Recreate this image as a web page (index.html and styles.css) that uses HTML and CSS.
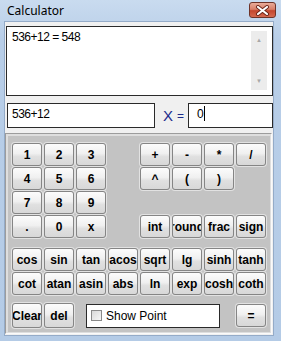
FILE: index.html
```html
<!DOCTYPE html>
<html lang="en">
<head>
    <meta charset="UTF-8">
    <title>Calculator</title>
    <link rel="stylesheet" href="styles.css">
</head>
<body>
    <div class="window">
        <!-- title bar -->
        <div class="titlebar">
            <span class="title">Calculator</span>
            <div class="close-btn">
                <svg width="15" height="11" viewBox="0 0 15 11">
                    <path d="M3 2 L12 9 M12 2 L3 9" stroke="#6a2418" stroke-width="4" stroke-linecap="round"/>
                    <path d="M3 2 L12 9 M12 2 L3 9" stroke="#fff" stroke-width="2.2" stroke-linecap="round"/>
                </svg>
            </div>
        </div>

        <div class="client">
            <!-- history -->
            <div class="history">
                <div class="history-text">536+12 = 548</div>
                <div class="scrollbar">
                    <span class="arrow">&#9650;</span>
                    <span class="arrow">&#9660;</span>
                </div>
            </div>

            <!-- expression + x value -->
            <div class="input-row">
                <div class="field expr">536+12</div>
                <span class="xlabel">X</span>
                <span class="eq">=</span>
                <div class="field xval">0<span class="caret"></span></div>
            </div>

            <!-- keypad -->
            <div class="pad">
                <div class="top">
                    <div class="digits">
                        <div class="key">1</div>
                        <div class="key">2</div>
                        <div class="key">3</div>
                        <div class="key">4</div>
                        <div class="key">5</div>
                        <div class="key">6</div>
                        <div class="key">7</div>
                        <div class="key">8</div>
                        <div class="key">9</div>
                        <div class="key">.</div>
                        <div class="key">0</div>
                        <div class="key">x</div>
                    </div>
                    <div class="ops-block">
                        <div class="ops">
                            <div class="key">+</div>
                            <div class="key">-</div>
                            <div class="key">*</div>
                            <div class="key">/</div>
                            <div class="key">^</div>
                            <div class="key">(</div>
                            <div class="key">)</div>
                        </div>
                        <div class="ops">
                            <div class="key">int</div>
                            <div class="key">round</div>
                            <div class="key">frac</div>
                            <div class="key">sign</div>
                        </div>
                    </div>
                </div>

                <div class="fns">
                    <div class="key">cos</div>
                    <div class="key">sin</div>
                    <div class="key">tan</div>
                    <div class="key">acos</div>
                    <div class="key">sqrt</div>
                    <div class="key">lg</div>
                    <div class="key">sinh</div>
                    <div class="key">tanh</div>
                    <div class="key">cot</div>
                    <div class="key">atan</div>
                    <div class="key">asin</div>
                    <div class="key">abs</div>
                    <div class="key">ln</div>
                    <div class="key">exp</div>
                    <div class="key">cosh</div>
                    <div class="key">coth</div>
                </div>

                <div class="bottom">
                    <div class="key tall">Clear</div>
                    <div class="key tall">del</div>
                    <div class="check-box">
                        <span class="check"></span>
                        <span>Show Point</span>
                    </div>
                    <div class="key equals">=</div>
                </div>
            </div>
        </div>
    </div>
</body>
</html>
```

FILE: styles.css
```css
body {
    margin: 0;
    font-family: "Liberation Sans", Arial, sans-serif;
    background: #b9cfe9;
}
.window {
    width: 281px;
    height: 341px;
    display: flex;
    flex-direction: column;
    background: linear-gradient(#c9dbef, #b8cee8 40px, #b4cbe6);
    box-sizing: border-box;
}
.titlebar {
    height: 21px;
    display: flex;
    align-items: center;
    padding: 0 5px 0 7px;
    flex-shrink: 0;
}
.title {
    font-family: "Noto Sans", "Liberation Sans", sans-serif;
    font-size: 12px;
    color: #000;
    margin-top: -1px;
}
.close-btn {
    margin-left: auto;
    width: 27px;
    height: 16px;
    box-sizing: border-box;
    border: 1px solid #6e3328;
    border-radius: 3px;
    background: linear-gradient(#e9ab98, #d8806a 45%, #c4462e 55%, #d56a50);
    display: flex;
    align-items: center;
    justify-content: center;
    margin-top: -1px;
}
.client {
    flex: 1;
    margin: 0 7px 5px 4px;
    border: 1px solid #94abc8;
    background: #f0f0f0;
    padding: 4px 0 1px 1px;
    display: flex;
    flex-direction: column;
}
.history {
    height: 70px;
    box-sizing: border-box;
    border: 1px solid #2a2a2a;
    background: #fff;
    display: flex;
}
.history-text {
    flex: 1;
    font-size: 12px;
    letter-spacing: -0.5px;
    line-height: 14px;
    padding: 3px 0 0 5px;
}
.scrollbar {
    width: 16px;
    margin: 4px 5px 5px 0;
    background: #ececec;
    display: flex;
    flex-direction: column;
    justify-content: space-between;
    align-items: center;
    padding: 5px 0;
    box-sizing: border-box;
}
.arrow {
    font-size: 6px;
    color: #a8a8a8;
    line-height: 8px;
}
.input-row {
    display: flex;
    align-items: center;
    margin-top: 7px;
    height: 25px;
}
.field {
    height: 25px;
    box-sizing: border-box;
    border: 1px solid #2a2a2a;
    background: #fff;
    font-size: 12px;
    letter-spacing: -0.5px;
    line-height: 14px;
    padding-top: 3px;
}
.expr {
    width: 148px;
    margin-left: 1px;
    padding-left: 4px;
}
.xval {
    flex: 1;
    padding-left: 8px;
    display: flex;
    align-items: flex-start;
}
.caret {
    width: 1px;
    height: 15px;
    background: #000;
    margin-left: 1px;
    margin-top: -1px;
}
.xlabel {
    color: #1b2b8c;
    font-size: 15px;
    margin-left: 8px;
    width: 10px;
}
.eq {
    color: #1b2b8c;
    font-size: 12px;
    margin: 0 4px;
}
.pad {
    flex: 1;
    margin: 5px 1px 0 -1px;
    border: 1px solid;
    border-color: #9c9c9c #fafafa #fafafa #9c9c9c;
    box-shadow: inset 2px 2px 0 #dedede, inset -1px -1px 0 #dedede;
    background: #c3c3c3;
    padding: 9px 0 0 6px;
}
.top {
    display: flex;
    gap: 34px;
}
.digits {
    display: grid;
    grid-template-columns: repeat(3, 30px);
    grid-auto-rows: 23px;
    gap: 1px 2px;
}
.ops-block {
    display: flex;
    flex-direction: column;
    justify-content: space-between;
}
.ops {
    display: grid;
    grid-template-columns: repeat(4, 30px);
    grid-auto-rows: 23px;
    gap: 1px 2px;
}
.fns {
    display: grid;
    grid-template-columns: repeat(8, 30px);
    grid-auto-rows: 23px;
    gap: 1px 2px;
    margin-top: 10px;
}
.key {
    box-sizing: border-box;
    border: 1px solid #858585;
    border-radius: 3px;
    box-shadow: 0 0 0 1px #e2e2e2;
    background: linear-gradient(#fcfcfc, #f0f0f0 45%, #e0e0e0 60%, #d8d8d8);
    font-weight: bold;
    font-size: 12px;
    color: #000;
    display: flex;
    align-items: center;
    justify-content: center;
    overflow: hidden;
    white-space: nowrap;
}
.bottom {
    display: flex;
    align-items: center;
    gap: 2px;
    margin-top: 8px;
    height: 25px;
}
.tall {
    width: 30px;
    height: 25px;
}
.check-box {
    width: 134px;
    height: 24px;
    box-sizing: border-box;
    margin-left: 10px;
    border: 1px solid #2a2a2a;
    background: #fff;
    display: flex;
    align-items: center;
    gap: 4px;
    padding-left: 4px;
    font-size: 12px;
}
.check {
    width: 11px;
    height: 11px;
    box-sizing: border-box;
    border: 1px solid #8a8a8a;
    background: linear-gradient(135deg, #d8d8d8, #f6f6f6);
}
.equals {
    width: 30px;
    height: 23px;
    margin-left: 14px;
}
```
